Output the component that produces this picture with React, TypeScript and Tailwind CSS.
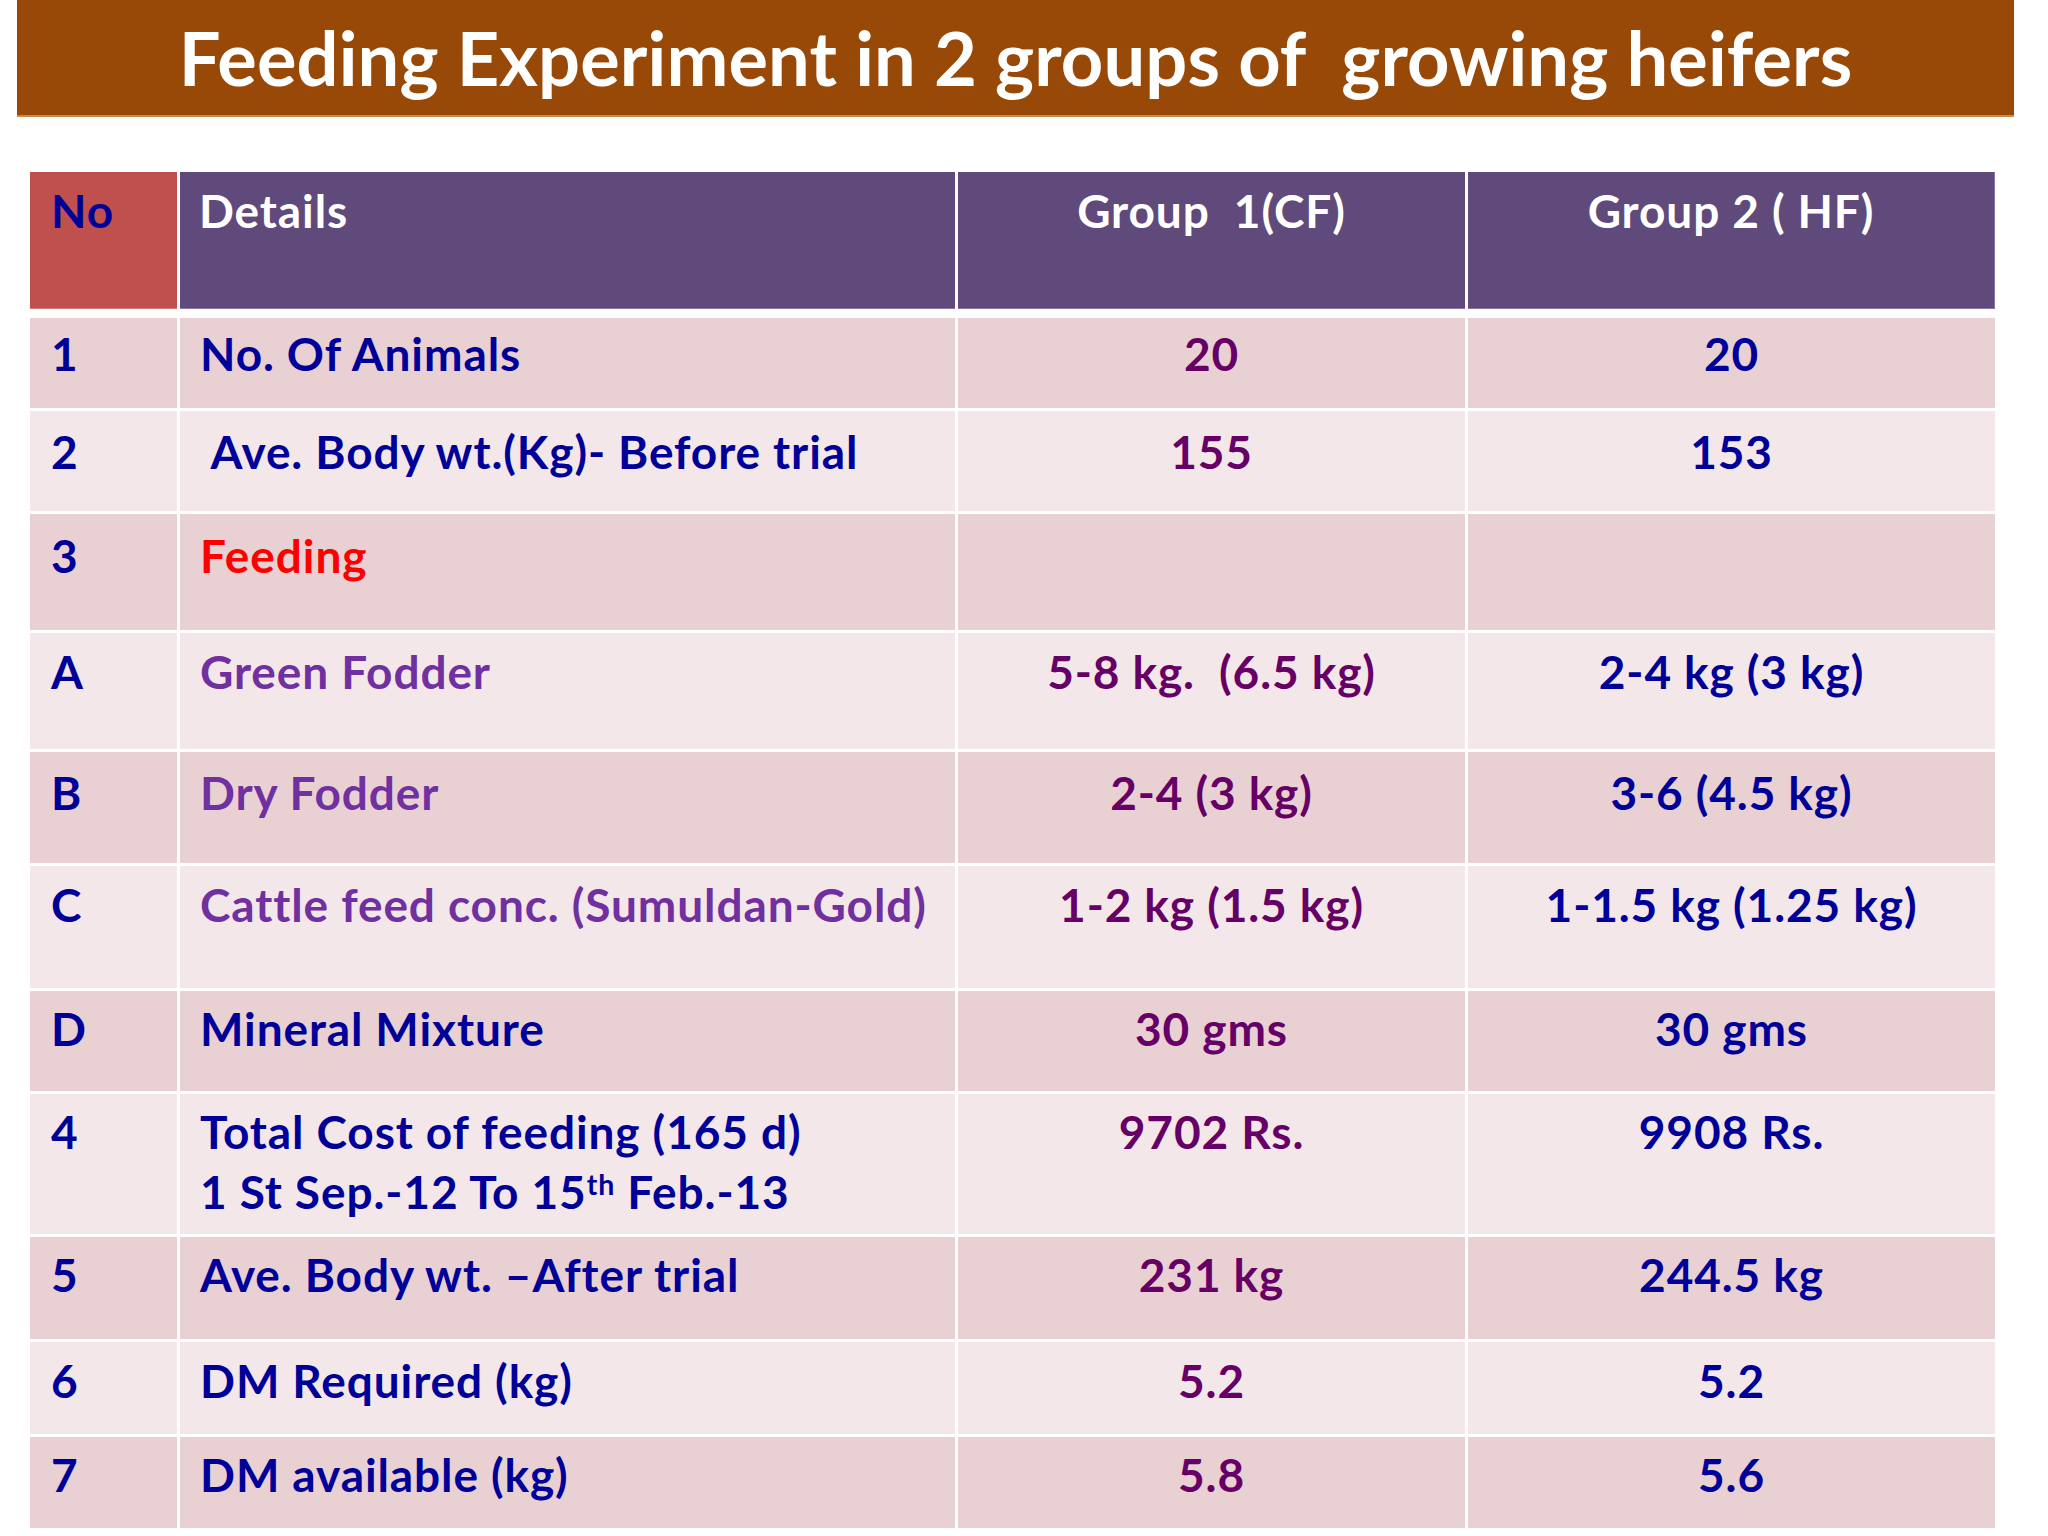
import React from "react";

type Cell = React.ReactNode;
type Row = {
  no: string;
  detail: Cell;
  detailColor: string;
  g1: Cell;
  g2: Cell;
  h: number;
  pt: number;
  bg: string;
};

const DARK = "bg-[#e8d0d3]";
const LIGHT = "bg-[#f3e7e9]";

const rows: Row[] = [
  { no: "1", detail: "No. Of Animals", detailColor: "text-[#000099]", g1: "20", g2: "20", h: 90, pt: 6, bg: DARK },
  { no: "2", detail: "\u00a0Ave. Body wt.(Kg)- Before trial", detailColor: "text-[#000099]", g1: "155", g2: "153", h: 100, pt: 11, bg: LIGHT },
  { no: "3", detail: "Feeding", detailColor: "text-[#ff0000]", g1: "", g2: "", h: 116, pt: 12, bg: DARK },
  { no: "A", detail: "Green Fodder", detailColor: "text-[#7030a0]", g1: "5-8 kg.  (6.5 kg)", g2: "2-4 kg (3 kg)", h: 116, pt: 9, bg: LIGHT },
  { no: "B", detail: "Dry Fodder", detailColor: "text-[#7030a0]", g1: "2-4 (3 kg)", g2: "3-6 (4.5 kg)", h: 111, pt: 11, bg: DARK },
  { no: "C", detail: "Cattle feed conc. (Sumuldan-Gold)", detailColor: "text-[#7030a0]", g1: "1-2 kg (1.5 kg)", g2: "1-1.5 kg (1.25 kg)", h: 122, pt: 9, bg: LIGHT },
  { no: "D", detail: "Mineral Mixture", detailColor: "text-[#000099]", g1: "30 gms", g2: "30 gms", h: 100, pt: 8, bg: DARK },
  {
    no: "4",
    detail: (
      <>
        Total Cost of feeding (165 d)
        <br />1 St Sep.-12 To 15<sup className="text-[0.62em]">th</sup> Feb.-13
      </>
    ),
    detailColor: "text-[#000099]",
    g1: "9702 Rs.",
    g2: "9908 Rs.",
    h: 140,
    pt: 8,
    bg: LIGHT,
  },
  { no: "5", detail: "Ave. Body wt. \u2013After trial", detailColor: "text-[#000099]", g1: "231 kg", g2: "244.5 kg", h: 102, pt: 8, bg: DARK },
  { no: "6", detail: "DM Required (kg)", detailColor: "text-[#000099]", g1: "5.2", g2: "5.2", h: 92, pt: 9, bg: LIGHT },
  { no: "7", detail: "DM available (kg)", detailColor: "text-[#000099]", g1: "5.8", g2: "5.6", h: 91, pt: 8, bg: DARK },
];

const GRID = "grid grid-cols-[147px_775px_507px_527px] gap-x-[3px]";

export default function App() {
  return (
    <div
      className="w-[2048px] h-[1536px] bg-white overflow-hidden"
      style={{ fontFamily: "Lato, 'Open Sans', sans-serif" }}
    >
      {/* Title bar */}
      <div className="px-[17px]">
        <div className="h-[117px] w-[1997px] bg-[#984807] border-b-2 border-[#c98a50] flex items-center justify-center">
          <h1 className="text-white font-bold text-[74px] leading-none whitespace-pre tracking-[0.1px]">
            Feeding Experiment in 2 groups of  growing heifers
          </h1>
        </div>
      </div>

      {/* Table */}
      <div className="pl-[30px] pt-[55px] text-[46px] font-bold leading-[60px] tracking-[0.9px]">
        <div className={`${GRID} h-[137px]`}>
          <div className="bg-[#c0504d] border-b border-[#d47b78] pl-[21px] pt-[9px] text-[#000099]">No</div>
          <div className="bg-[#604a7b] border-b border-[#8a76a6] pl-[19px] pt-[9px] text-white">Details</div>
          <div className="bg-[#604a7b] border-b border-[#8a76a6] pt-[9px] text-white text-center whitespace-pre">Group  1(CF)</div>
          <div className="bg-[#604a7b] border-b border-[#8a76a6] border-r border-r-[#8a76a6] pt-[9px] text-white text-center whitespace-pre">Group 2 ( HF)</div>
        </div>

        <div className="mt-[9px] flex flex-col gap-y-[3px]">
          {rows.map((r) => (
            <div key={r.no} className={GRID} style={{ height: r.h }}>
              <div className={`${r.bg} pl-[21px] text-[#000099]`} style={{ paddingTop: r.pt }}>
                {r.no}
              </div>
              <div className={`${r.bg} pl-[20px] whitespace-pre ${r.detailColor}`} style={{ paddingTop: r.pt }}>
                {r.detail}
              </div>
              <div className={`${r.bg} text-center whitespace-pre text-[#660066]`} style={{ paddingTop: r.pt }}>
                {r.g1}
              </div>
              <div className={`${r.bg} text-center whitespace-pre text-[#000099]`} style={{ paddingTop: r.pt }}>
                {r.g2}
              </div>
            </div>
          ))}
        </div>
      </div>
    </div>
  );
}
